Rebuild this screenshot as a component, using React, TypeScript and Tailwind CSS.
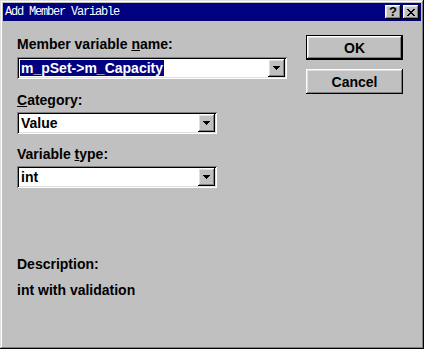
const raised =
  'shadow-[inset_-1px_-1px_#000,inset_1px_1px_#fff,inset_-2px_-2px_#808080,inset_2px_2px_#dfdfdf]';
const sunken =
  'shadow-[inset_1px_1px_#808080,inset_-1px_-1px_#fff,inset_2px_2px_#000,inset_-2px_-2px_#dfdfdf]';

const Arrow = () => (
  <svg width="7" height="4" viewBox="0 0 7 4" className="block">
    <path d="M0 0h7v1h-1v1h-1v1h-1v1h-1v-1h-1v-1h-1v-1h-1z" fill="#000" />
  </svg>
);

const Combo = ({ value, width, selected }: { value: string; width: string; selected?: boolean }) => (
  <div className={`${width} h-[22px] bg-white ${sunken} flex items-center p-[2px]`}>
    <div className="flex-1 flex items-center pl-[1px]">
      <span
        className={
          selected
            ? 'bg-[#000080] text-white px-[1px] leading-4 h-[16px]'
            : 'text-black px-[1px] leading-4'
        }
      >
        {value}
      </span>
    </div>
    <div className={`w-[17px] h-[18px] bg-[#c0c0c0] ${raised} flex items-center justify-center`}>
      <Arrow />
    </div>
  </div>
);

const Button = ({ label, isDefault }: { label: string; isDefault?: boolean }) => (
  <div
    className={`w-[97px] h-[25px] bg-[#c0c0c0] flex items-center justify-center leading-4 ${
      isDefault
        ? 'border border-black shadow-[inset_-1px_-1px_#000,inset_1px_1px_#fff,inset_-2px_-2px_#808080,inset_2px_2px_#dfdfdf]'
        : raised
    }`}
  >
    {label}
  </div>
);

export default function App() {
  return (
    <div
      className="w-[424px] h-[349px] bg-[#c0c0c0] p-[3px] flex flex-col text-black font-['Liberation_Sans',Arial,sans-serif] font-bold text-[14px] shadow-[inset_-1px_-1px_#000,inset_1px_1px_#dfdfdf,inset_-2px_-2px_#808080,inset_2px_2px_#fff]"
    >
      <div className="h-[18px] bg-[#000080] flex items-center pl-[2px] pr-[2px]">
        <span className="text-white font-['Liberation_Mono',monospace] font-normal text-[12px] tracking-[-1.2px] leading-none">
          Add Member Variable
        </span>
        <div className="ml-auto flex gap-[2px]">
          <div className={`w-[16px] h-[14px] bg-[#c0c0c0] ${raised} flex items-center justify-center text-[13px] leading-none font-bold pb-[1px]`}>
            ?
          </div>
          <div className={`w-[16px] h-[14px] bg-[#c0c0c0] ${raised} flex items-center justify-center`}>
            <svg width="8" height="7" viewBox="0 0 8 7" className="block">
              <path d="M0 0h2v1h1v1h2v-1h1v-1h2v1h-1v1h-1v1h-1v1h1v1h1v1h1v1h-2v-1h-1v-1h-2v1h-1v1h-2v-1h1v-1h1v-1h1v-1h-1v-1h-1v-1h-1z" fill="#000" />
            </svg>
          </div>
        </div>
      </div>

      <div className="flex flex-1 pl-[14px]">
        <div className="w-[270px] flex flex-col">
          <div className="mt-[15px] leading-4">
            Member variable <span className="underline">n</span>ame:
          </div>
          <div className="mt-[5px]">
            <Combo value="m_pSet->m_Capacity" width="w-[270px]" selected />
          </div>
          <div className="mt-[13px] leading-4">
            <span className="underline">C</span>ategory:
          </div>
          <div className="mt-[4px]">
            <Combo value="Value" width="w-[200px]" />
          </div>
          <div className="mt-[12px] leading-4">
            Variable <span className="underline">t</span>ype:
          </div>
          <div className="mt-[4px]">
            <Combo value="int" width="w-[200px]" />
          </div>
          <div className="mt-[68px] leading-4">Description:</div>
          <div className="mt-[10px] leading-4">int with validation</div>
        </div>

        <div className="ml-auto mr-[18px] pt-[14px] flex flex-col gap-[9px]">
          <Button label="OK" isDefault />
          <Button label="Cancel" />
        </div>
      </div>
    </div>
  );
}
